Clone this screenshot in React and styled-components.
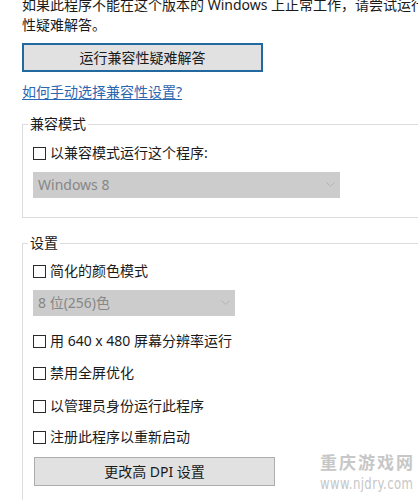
import React from 'react';
import styled, { createGlobalStyle } from 'styled-components';

const GlobalStyle = createGlobalStyle`
  html, body {
    margin: 0;
    padding: 0;
    background: #ffffff;
    overflow: hidden;
  }
  body {
    font-family: "Noto Sans", "Noto Sans CJK SC", sans-serif;
    font-size: 14px;
    color: #1a1a1a;
  }
`;

const Page = styled.div`
  position: relative;
  width: 418px;
  height: 500px;
  overflow: hidden;
`;

const Content = styled.div`
  width: 520px;
  padding-left: 22px;
  display: flex;
  flex-direction: column;
  align-items: flex-start;
`;

const Intro = styled.p`
  margin: -5px 0 0;
  line-height: 20px;
  white-space: nowrap;
`;

const PushButton = styled.button`
  font-family: "Noto Sans", "Noto Sans CJK SC", sans-serif;
  font-size: 14px;
  color: #1a1a1a;
  background: #e1e1e1;
  border: ${p => (p.$primary ? '2px solid #22699f' : '1px solid #adadad')};
  width: ${p => p.$width}px;
  height: 29px;
  margin-top: ${p => p.$top}px;
  margin-left: ${p => p.$left || 0}px;
  padding: 0;
  line-height: 20px;
  cursor: default;
`;

const HelpLink = styled.a`
  margin-top: 10px;
  line-height: 20px;
  color: #2a67b0;
  text-decoration: underline;
  text-underline-offset: 2px;
  cursor: pointer;
`;

const Group = styled.fieldset`
  margin: ${p => p.$top}px 0 0;
  padding: 0 0 ${p => p.$bottom}px 10px;
  border: 1px solid #dcdcdc;
  border-right: none;
  min-width: 0;
  width: 480px;
  box-sizing: border-box;
  display: flex;
  flex-direction: column;
  align-items: flex-start;
`;

const Legend = styled.legend`
  padding: 0 2px;
  margin-left: -5px;
  line-height: 20px;
  color: #1a1a1a;
`;

const CheckRow = styled.label`
  display: flex;
  align-items: center;
  gap: 4px;
  height: 20px;
  margin-top: ${p => p.$top}px;
  line-height: 20px;
`;

const Box = styled.span`
  width: 13px;
  height: 13px;
  box-sizing: border-box;
  border: 1px solid #2b2b2b;
  background: #ffffff;
  flex-shrink: 0;
`;

const Select = styled.div`
  margin-top: ${p => p.$top}px;
  width: ${p => p.$width}px;
  height: 26px;
  box-sizing: border-box;
  background: #cccccc;
  color: #878787;
  display: flex;
  align-items: center;
  justify-content: space-between;
  padding: 0 5px 0 5px;
  line-height: 20px;
`;

const Chevron = styled.svg`
  width: 9px;
  height: 6px;
  flex-shrink: 0;
`;

const Watermark = styled.div`
  position: absolute;
  left: 320px;
  top: 451px;
  display: flex;
  flex-direction: column;
  align-items: flex-start;
  color: #c7c7c7;
  pointer-events: none;
`;

const WatermarkTitle = styled.span`
  font-family: "Noto Sans CJK SC", sans-serif;
  font-weight: 700;
  font-size: 17px;
  letter-spacing: 2px;
  line-height: 22px;
  white-space: nowrap;
`;

const WatermarkUrl = styled.span`
  font-family: "DejaVu Sans", sans-serif;
  font-size: 15px;
  line-height: 17px;
  display: inline-block;
  transform: scaleX(0.78);
  transform-origin: left center;
  letter-spacing: 0.5px;
  margin-top: 3px;
  white-space: nowrap;
`;

function Checkbox({ top, children }) {
  return (
    <CheckRow $top={top}>
      <Box />
      <span>{children}</span>
    </CheckRow>
  );
}

function Dropdown({ top, width, value }) {
  return (
    <Select $top={top} $width={width}>
      <span>{value}</span>
      <Chevron viewBox="0 0 9 6">
        <path d="M0.5 0.5 L4.5 4.5 L8.5 0.5" fill="none" stroke="#b3b3b3" strokeWidth="1" />
      </Chevron>
    </Select>
  );
}

export default function App() {
  return (
    <Page>
      <GlobalStyle />
      <Content>
        <Intro>
          如果此程序不能在这个版本的 Windows 上正常工作，请尝试运行兼容
          <br />
          性疑难解答。
        </Intro>
        <PushButton $primary $width={241} $top={8}>运行兼容性疑难解答</PushButton>
        <HelpLink>如何手动选择兼容性设置?</HelpLink>

        <Group $top={12} $bottom={19}>
          <Legend>兼容模式</Legend>
          <Checkbox top={9}>以兼容模式运行这个程序:</Checkbox>
          <Dropdown top={9} width={307} value="Windows 8" />
        </Group>

        <Group $top={15} $bottom={40}>
          <Legend>设置</Legend>
          <Checkbox top={8}>简化的颜色模式</Checkbox>
          <Dropdown top={9} width={202} value="8 位(256)色" />
          <Checkbox top={15}>用 640 x 480 屏幕分辨率运行</Checkbox>
          <Checkbox top={12}>禁用全屏优化</Checkbox>
          <Checkbox top={13}>以管理员身份运行此程序</Checkbox>
          <Checkbox top={11}>注册此程序以重新启动</Checkbox>
          <PushButton $width={241} $top={10} $left={1}>更改高 DPI 设置</PushButton>
        </Group>
      </Content>
      <Watermark>
        <WatermarkTitle>重庆游戏网</WatermarkTitle>
        <WatermarkUrl>www.njdry.com</WatermarkUrl>
      </Watermark>
    </Page>
  );
}
